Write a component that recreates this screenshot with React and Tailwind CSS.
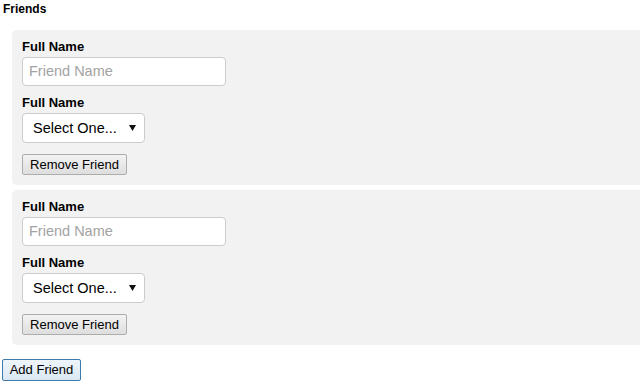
import React from "react";

const font = { fontFamily: '"Liberation Sans", Arial, sans-serif' };

function FriendPanel() {
  return (
    <div className="bg-[#f2f2f2] rounded-l-[5px] ml-[12px] pt-[9px] pb-[10px] pl-[10px]">
      <div className="text-[13px] leading-[15px] font-bold text-black mb-[3px]">Full Name</div>
      <div className="w-[204px] h-[29px] bg-white border border-[#cccccc] rounded-[4px] flex items-center pl-[6px] text-[14.5px] text-[#a3a3a3]">
        Friend Name
      </div>
      <div className="text-[13px] leading-[15px] font-bold text-black mt-[9px] mb-[3px]">Full Name</div>
      <div className="w-[123px] h-[30px] bg-white border border-[#cccccc] rounded-[4px] flex items-center pl-[10px] pr-[8px] text-[14.5px] text-black justify-between">
        <span className="mt-[1px]">Select One...</span>
        <svg width="7" height="6" viewBox="0 0 7 6" className="mb-[1px]">
          <polygon points="0,0 7,0 3.5,6" fill="#111" />
        </svg>
      </div>
      <div className="mt-[11px] w-[105px] h-[21px] border border-[#adadad] rounded-[2px] bg-gradient-to-b from-[#f3f3f3] to-[#dedede] flex items-center justify-center text-[13px] text-black">
        Remove Friend
      </div>
    </div>
  );
}

export default function App() {
  return (
    <div className="w-[640px] h-[391px] bg-white overflow-hidden" style={font}>
      <div className="pl-[3px] pt-[2px] text-[12px] leading-[14px] font-bold text-black">Friends</div>
      <div className="mt-[14px] flex flex-col gap-[5px]">
        <FriendPanel />
        <FriendPanel />
      </div>
      <div className="mt-[14px] ml-[2px] w-[79px] h-[22px] border border-[#3d7bad] rounded-[2px] bg-gradient-to-b from-[#eef5fb] to-[#dbe8f4] flex items-center justify-center text-[13px] text-black">
        Add Friend
      </div>
    </div>
  );
}
